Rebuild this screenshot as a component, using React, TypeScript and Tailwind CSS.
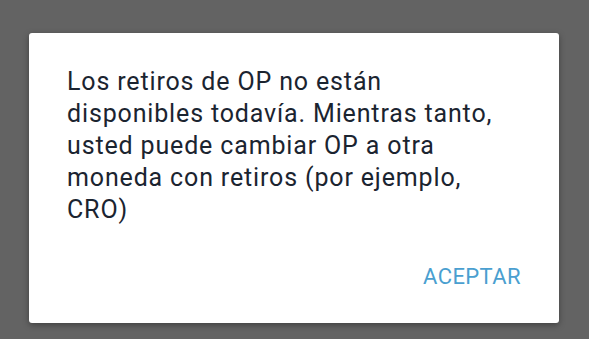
export default function App() {
  return (
    <div className="w-[589px] h-[339px] bg-[#636363] pt-[33px] pl-[29px] overflow-hidden">
      {/* Dialog */}
      <div className="w-[530px] h-[290px] bg-white rounded-[3px] shadow-[0_2px_6px_rgba(0,0,0,0.35)] flex flex-col">
        <p
          className="ml-[38px] mt-[33px] w-[440px] text-[25px] leading-[32px] tracking-[0.85px] text-[#1b2430]"
          style={{ fontFamily: 'Roboto, "Noto Sans", sans-serif' }}
        >
          Los retiros de OP no están disponibles todavía. Mientras tanto, usted puede cambiar OP a otra moneda con retiros (por ejemplo, CRO)
        </p>
        <div className="flex-1" />
        <div className="flex justify-end pr-[38px] pb-[34px]">
          <button
            className="text-[22px] leading-[24px] tracking-[0.4px] text-[#4a9fd0] uppercase"
            style={{ fontFamily: 'Roboto, "Noto Sans", sans-serif' }}
          >
            Aceptar
          </button>
        </div>
      </div>
    </div>
  )
}
